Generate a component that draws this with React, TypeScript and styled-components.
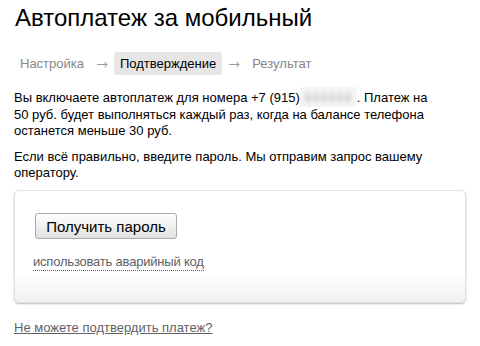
import styled, { createGlobalStyle } from 'styled-components';

const GlobalStyle = createGlobalStyle`
  body {
    margin: 0;
    background: #fff;
    font-family: 'Liberation Sans', Arial, sans-serif;
    font-size: 13px;
    color: #000;
  }
`;

const Page = styled.div`
  padding: 4px 14px 0;
  width: 452px;
`;

const Title = styled.h1`
  margin: 0;
  font-size: 24px;
  line-height: 28px;
  font-weight: normal;
  padding-left: 1px;
`;

const Steps = styled.div`
  display: flex;
  align-items: center;
  margin-top: 20px;
  height: 23px;
`;

const Step = styled.span<{ $active?: boolean }>`
  display: flex;
  align-items: center;
  height: 23px;
  padding: 0 6px;
  border-radius: 3px;
  color: ${(p) => (p.$active ? '#000' : '#888')};
  background: ${(p) => (p.$active ? '#e6e6e6' : 'transparent')};
`;

const Arrow = styled.span`
  color: #888;
  width: 24px;
  text-align: center;
  font-family: 'DejaVu Sans', sans-serif;
  font-size: 14px;
  font-weight: 300;
`;

const Text = styled.p<{ $gap?: number }>`
  margin: ${(p) => p.$gap ?? 0}px 0 0;
  line-height: 16px;
  width: 416px;
`;

const Hidden = styled.span`
  display: inline-flex;
  align-items: center;
  justify-content: center;
  gap: 2px;
  vertical-align: top;
  width: 57px;
  height: 20px;
  margin-top: -3px;
  background: #f5f5f5;
  overflow: hidden;
`;

const Blot = styled.i`
  display: block;
  width: 6px;
  height: 9px;
  border-radius: 2px;
  background: #d6d6d6;
  filter: blur(2px);
`;

const Card = styled.div`
  margin-top: 9px;
  height: 113px;
  box-sizing: border-box;
  border: 1px solid #e2e2e2;
  border-radius: 5px;
  box-shadow: 0 1px 2px rgba(0, 0, 0, 0.28);
  background: linear-gradient(to bottom, #fff 72%, #f1f1f1 100%);
  padding: 22px 0 0 20px;
`;

const Button = styled.button`
  display: block;
  width: 142px;
  height: 26px;
  padding: 0;
  border: 1px solid #a9a9a9;
  border-radius: 3px;
  background: linear-gradient(to bottom, #fdfdfd 0%, #f1f1f1 50%, #e0e0e0 100%);
  font-family: inherit;
  font-size: 15px;
  color: #000;
`;

const DottedLink = styled.a`
  display: inline-block;
  margin: 15px 0 0 -2px;
  font-size: 13px;
  line-height: 16px;
  letter-spacing: -0.2px;
  color: #5f5f66;
  text-decoration: none;
  border-bottom: 1px dotted #5f5f66;
`;

const HelpLink = styled.a`
  display: inline-block;
  margin-top: 17px;
  font-size: 13px;
  color: #5f5f66;
  text-decoration: underline;
`;

export default function App() {
  return (
    <>
      <GlobalStyle />
      <Page>
        <Title>Автоплатеж за мобильный</Title>
        <Steps>
          <Step>Настройка</Step>
          <Arrow>→</Arrow>
          <Step $active>Подтверждение</Step>
          <Arrow>→</Arrow>
          <Step>Результат</Step>
        </Steps>
        <Text $gap={15}>
          Вы включаете автоплатеж для номера +7 (915)
          <Hidden>
            {[0, 1, 2, 3, 4, 5].map((i) => (
              <Blot key={i} />
            ))}
          </Hidden>
          . Платеж на 50 руб. будет выполняться каждый раз, когда на балансе телефона останется меньше 30 руб.
        </Text>
        <Text $gap={10}>
          Если всё правильно, введите пароль. Мы отправим запрос вашему оператору.
        </Text>
        <Card>
          <Button>Получить пароль</Button>
          <DottedLink>использовать аварийный код</DottedLink>
        </Card>
        <HelpLink>Не можете подтвердить платеж?</HelpLink>
      </Page>
    </>
  );
}
